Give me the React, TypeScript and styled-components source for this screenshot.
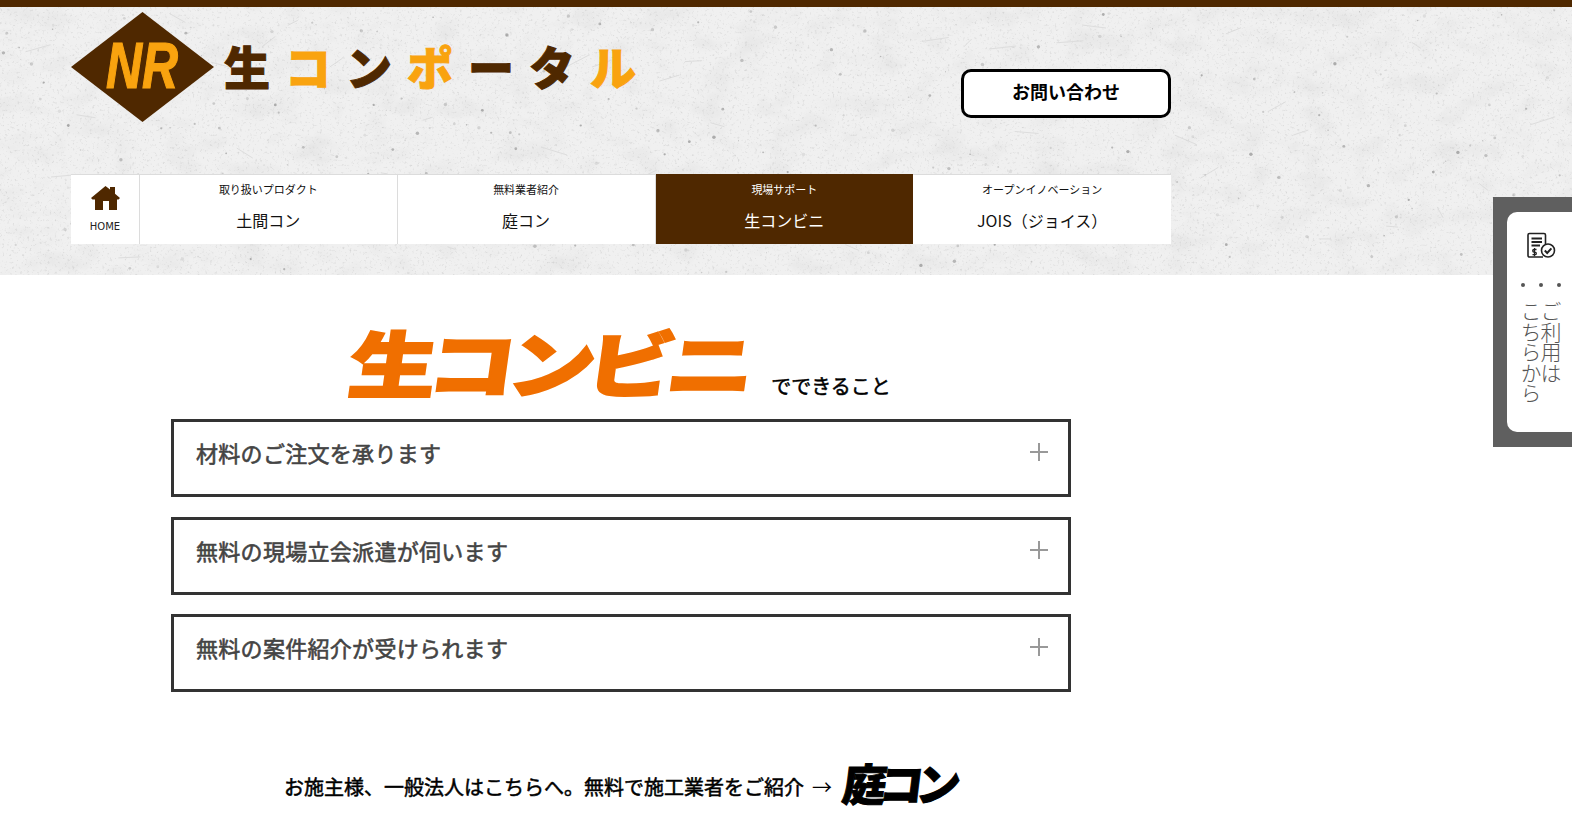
import { createGlobalStyle, styled } from 'styled-components';

const BROWN = '#4f2800';
const AMBER = '#f9a30f';
const ORANGE = '#f06f00';
const JP = '"Noto Sans CJK JP", "Noto Sans", sans-serif';

const GlobalStyle = createGlobalStyle`
  html, body {
    margin: 0;
    padding: 0;
    background: #fff;
    font-family: ${JP};
    overflow: hidden;
  }
`;

const Page = styled.div`
  position: relative;
  height: 837px;
  overflow: hidden;
`;

const Header = styled.header`
  position: relative;
  height: 268px;
  border-top: 7px solid ${BROWN};
  background: #f0f0f0;
`;

const Texture = styled.svg`
  position: absolute;
  inset: 0;
  width: 100%;
  height: 100%;
`;

const HeaderInner = styled.div`
  position: relative;
  width: 1100px;
  margin-left: 71px;
  display: flex;
  flex-direction: column;
`;

const TopRow = styled.div`
  height: 167px;
  display: flex;
  justify-content: space-between;
  align-items: flex-start;
`;

const Brand = styled.div`
  display: flex;
  align-items: center;
  gap: 10px;
  padding-top: 5px;
`;

const BrandName = styled.div`
  display: flex;
  gap: 15px;
  font-size: 46px;
  line-height: 60px;
  font-weight: 900;
  margin-top: -4px;
`;

const BrandChar = styled.span<{ $accent?: boolean }>`
  color: ${(p) => (p.$accent ? AMBER : BROWN)};
  -webkit-text-stroke: 1px ${(p) => (p.$accent ? AMBER : BROWN)};
`;

const ContactButton = styled.a`
  width: 210px;
  height: 49px;
  box-sizing: border-box;
  margin-top: 62px;
  display: flex;
  align-items: center;
  justify-content: center;
  background: #fff;
  border: 3px solid #000;
  border-radius: 10px;
  color: #000;
  font-size: 18px;
  font-weight: 700;
  padding-bottom: 6px;
`;

const Nav = styled.nav`
  height: 70px;
  display: grid;
  grid-template-columns: 69px repeat(4, 1fr);
  background: #fff;
  box-shadow: inset 0 1px 0 #dcdcdc;
`;

const HomeLink = styled.a`
  display: flex;
  flex-direction: column;
  align-items: center;
  padding-top: 12px;
  box-sizing: border-box;
  border-right: 1px solid #dcdcdc;
`;

const HomeLabel = styled.span`
  margin-top: 11px;
  color: #222;
  font-size: 10px;
  line-height: 12px;
  font-family: "DejaVu Sans", sans-serif;
`;

const NavItem = styled.a<{ $active?: boolean; $last?: boolean }>`
  display: flex;
  flex-direction: column;
  align-items: center;
  box-sizing: border-box;
  padding-top: 7px;
  background: ${(p) => (p.$active ? BROWN : 'transparent')};
  color: ${(p) => (p.$active ? '#fff' : '#111')};
  border-right: ${(p) => (p.$active || p.$last ? 'none' : '1px solid #dcdcdc')};
`;

const NavSub = styled.span`
  font-size: 11px;
  line-height: 17px;
`;

const NavMain = styled.span`
  margin-top: 9px;
  font-size: 16px;
  line-height: 26px;
`;

const Main = styled.main`
  width: 900px;
  margin: 50px 0 0 171px;
  display: flex;
  flex-direction: column;
`;

const TitleRow = styled.div`
  height: 94px;
  display: flex;
  justify-content: center;
  align-items: flex-end;
  gap: 20px;
  padding-bottom: 21px;
  box-sizing: border-box;
`;

const TitleLogo = styled.div`
  width: 400px;
  height: 68px;
  box-sizing: border-box;
  padding: 0 3px 0 7px;
  display: flex;
  justify-content: space-between;
  align-items: center;
  color: ${ORANGE};
  font-size: 72px;
  font-weight: 900;
  line-height: 68px;
  transform: translateY(-3px) skewX(-8deg);
  -webkit-text-stroke: 2px ${ORANGE};
`;

const TitleChar = styled.span`
  display: inline-block;
  transform: scaleX(1.22);
`;

const TitleSuffix = styled.span`
  color: #000;
  font-size: 20px;
  line-height: 24px;
  -webkit-text-stroke: 0.5px #000;
`;

const AccordionList = styled.div`
  display: flex;
  flex-direction: column;
  gap: 19.5px;
`;

const AccordionItem = styled.div`
  height: 78px;
  box-sizing: border-box;
  border: 3px solid #333;
  padding: 12px 19px 0 22px;
  display: flex;
  justify-content: space-between;
  align-items: flex-start;
  color: #444;
`;

const AccordionLabel = styled.span`
  font-size: 22px;
  line-height: 36px;
  letter-spacing: 0.3px;
  -webkit-text-stroke: 0.6px #444;
`;

const PlusIcon = styled.svg`
  width: 20px;
  height: 20px;
  margin-top: 8px;
`;

const Promo = styled.div`
  height: 50px;
  margin-top: 65px;
  padding-left: 113px;
  display: flex;
  align-items: center;
  gap: 11px;
  color: #000;
`;

const PromoText = styled.span`
  padding-top: 10px;
  font-size: 20px;
  line-height: 30px;
  -webkit-text-stroke: 0.5px #000;
`;

const PromoArrow = styled.span`
  margin-left: 8px;
  -webkit-text-stroke: 0;
`;

const PromoLogo = styled.span`
  display: inline-block;
  font-size: 44px;
  line-height: 46px;
  font-weight: 900;
  letter-spacing: -7px;
  transform: skewX(-7deg);
  -webkit-text-stroke: 1px #000;
`;

const SideTab = styled.aside`
  position: absolute;
  top: 197px;
  right: 0;
  width: 65px;
  height: 220px;
  padding: 15px 0 15px 14px;
  background: #5f5f5f;
`;

const SideCard = styled.div`
  width: 100%;
  height: 100%;
  box-sizing: border-box;
  background: #fff;
  border-radius: 10px 0 0 10px;
  display: flex;
  flex-direction: column;
  align-items: center;
  padding: 20px 0 0 3px;
  color: #555;
`;

const Dots = styled.div`
  display: flex;
  gap: 14px;
  margin-top: 23px;
`;

const Dot = styled.i`
  width: 4px;
  height: 4px;
  border-radius: 50%;
  background: #555;
`;

const SideText = styled.div`
  writing-mode: vertical-rl;
  margin-top: 14px;
  font-size: 21px;
  line-height: 20px;
  font-weight: 300;
  letter-spacing: -0.5px;
`;

const specks = Array.from({ length: 300 }, (_, i) => ({
  x: (i * 373.7) % 1572,
  y: (i * i * 0.61 + i * 97.3) % 268,
  r: 0.5 + ((i * 7) % 5) * 0.3,
  o: 0.15 + ((i * 11) % 6) * 0.08,
}));

const scratches = Array.from({ length: 50 }, (_, i) => {
  const x = (i * 211.3) % 1572;
  const y = (i * i * 1.37 + i * 53.9) % 268;
  const dx = 6 + ((i * 13) % 22);
  const dy = ((i * 17) % 25) - 12;
  return `M${x} ${y}l${dx} ${dy}`;
}).join('');

const ConcreteTexture = () => (
  <Texture aria-hidden="true">
    <filter id="mottle">
      <feTurbulence type="fractalNoise" baseFrequency="0.03 0.045" numOctaves="6" seed="8" />
      <feColorMatrix values="0 0 0 0 0.5  0 0 0 0 0.5  0 0 0 0 0.5  1.1 0 0 0 -0.5" />
    </filter>
    <filter id="grain">
      <feTurbulence type="fractalNoise" baseFrequency="0.4" numOctaves="3" seed="3" />
      <feColorMatrix values="0 0 0 0 0.45  0 0 0 0 0.45  0 0 0 0 0.45  2.4 0 0 0 -1.42" />
    </filter>
    <rect width="100%" height="100%" filter="url(#mottle)" opacity="0.35" />
    <rect width="100%" height="100%" filter="url(#grain)" opacity="0.5" />
    <path d={scratches} stroke="#dddddd" strokeWidth="1" fill="none" />
    {specks.map((s, i) => (
      <circle key={i} cx={s.x} cy={s.y} r={s.r} fill="#777" opacity={s.o} />
    ))}
  </Texture>
);

const BrandMark = () => (
  <svg width="143" height="110" viewBox="0 0 143 110">
    <polygon points="71.5,0 143,55 71.5,110 0,55" fill={BROWN} />
    <text
      x="71"
      y="76"
      textAnchor="middle"
      fontFamily="Liberation Sans"
      fontSize="64"
      fontWeight="700"
      fontStyle="italic"
      fill={AMBER}
      stroke={AMBER}
      strokeWidth="1.2"
      textLength="72"
      lengthAdjust="spacingAndGlyphs"
    >
      NR
    </text>
  </svg>
);

const HomeIcon = () => (
  <svg width="29" height="24" viewBox="0 0 29 24" fill={BROWN}>
    <path d="M14.5 0 19 3.500V1h5v6.800L29 12l-1.500 1.500H26V24h-8v-9h-6v9H4V13.500H1.500L0 12z" />
  </svg>
);

const DocCheckIcon = () => (
  <svg width="30" height="28" viewBox="0 0 30 28" fill="none" stroke="#222" strokeWidth="1.6">
    <path d="M17 25H3.500A1.500 1.500 0 0 1 2 23.500V3A1.500 1.500 0 0 1 3.500 1.500H18A1.500 1.500 0 0 1 19.500 3V12" />
    <path d="M5.500 6.500H16M5.500 10H16M5.500 13.500H14" strokeWidth="1.800" />
    <path d="M10.500 17.500H8a1.300 1.300 0 0 0 0 2.600h1a1.300 1.300 0 0 1 0 2.600H6.500M8.500 16v8.200" strokeWidth="1.300" />
    <circle cx="22" cy="18.500" r="6.500" />
    <path d="M18.800 18.500l2.400 2.500 4.200-4.600" strokeWidth="2" />
  </svg>
);

const navItems = [
  { sub: '取り扱いプロダクト', main: '土間コン' },
  { sub: '無料業者紹介', main: '庭コン' },
  { sub: '現場サポート', main: '生コンビニ', active: true },
  { sub: 'オープンイノベーション', main: 'JOIS（ジョイス）', last: true },
];

const accordionLabels = [
  '材料のご注文を承ります',
  '無料の現場立会派遣が伺います',
  '無料の案件紹介が受けられます',
];

const brandChars = [
  { c: '生' },
  { c: 'コ', accent: true },
  { c: 'ン' },
  { c: 'ポ', accent: true },
  { c: 'ー' },
  { c: 'タ' },
  { c: 'ル', accent: true },
];

export default function App() {
  return (
    <Page>
      <GlobalStyle />
      <Header>
        <ConcreteTexture />
        <HeaderInner>
          <TopRow>
            <Brand>
              <BrandMark />
              <BrandName>
                {brandChars.map((b) => (
                  <BrandChar key={b.c} $accent={b.accent}>
                    {b.c}
                  </BrandChar>
                ))}
              </BrandName>
            </Brand>
            <ContactButton>お問い合わせ</ContactButton>
          </TopRow>
          <Nav>
            <HomeLink>
              <HomeIcon />
              <HomeLabel>HOME</HomeLabel>
            </HomeLink>
            {navItems.map((item) => (
              <NavItem key={item.main} $active={item.active} $last={item.last}>
                <NavSub>{item.sub}</NavSub>
                <NavMain>{item.main}</NavMain>
              </NavItem>
            ))}
          </Nav>
        </HeaderInner>
      </Header>
      <Main>
        <TitleRow>
          <TitleLogo>
            {['生', 'コ', 'ン', 'ビ', 'ニ'].map((c) => (
              <TitleChar key={c}>{c}</TitleChar>
            ))}
          </TitleLogo>
          <TitleSuffix>でできること</TitleSuffix>
        </TitleRow>
        <AccordionList>
          {accordionLabels.map((label) => (
            <AccordionItem key={label}>
              <AccordionLabel>{label}</AccordionLabel>
              <PlusIcon viewBox="0 0 20 20" stroke="#999" strokeWidth="2">
                <path d="M10 1v18M1 10h18" />
              </PlusIcon>
            </AccordionItem>
          ))}
        </AccordionList>
        <Promo>
          <PromoText>
            お施主様、一般法人はこちらへ。無料で施工業者をご紹介
            <PromoArrow>→</PromoArrow>
          </PromoText>
          <PromoLogo>庭コン</PromoLogo>
        </Promo>
      </Main>
      <SideTab>
        <SideCard>
          <DocCheckIcon />
          <Dots>
            <Dot />
            <Dot />
            <Dot />
          </Dots>
          <SideText>
            ご利用は
            <br />
            こちらから
          </SideText>
        </SideCard>
      </SideTab>
    </Page>
  );
}
